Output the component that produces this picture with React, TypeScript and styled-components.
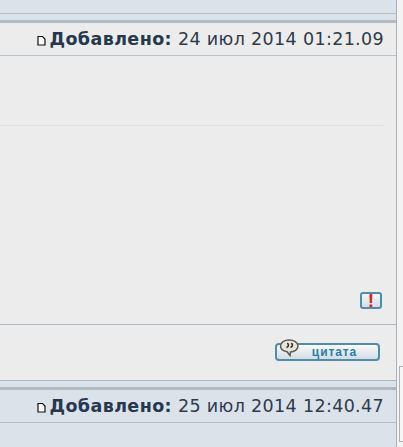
import React from "react";
import styled, { createGlobalStyle } from "styled-components";

const GlobalStyle = createGlobalStyle`
   html, body {
      margin: 0;
      padding: 0;
      background: #f3f3f3;
      overflow: hidden;
   }
`;

const Page = styled.div`
   position: relative;
   width: 403px;
   height: 447px;
   overflow: hidden;
   font-family: "DejaVu Sans", Verdana, sans-serif;
`;

const Thread = styled.div`
   width: 396px;
   height: 447px;
   border-right: 1px solid #a9b2ba;
   display: flex;
   flex-direction: column;
`;

const Band = styled.div<{ $h: number; $line?: boolean }>`
   height: ${({ $h }) => $h}px;
   flex: none;
   background: #dbe2ea;
   border-bottom: ${({ $line }) => ($line ? "1px solid #b4bec6" : "none")};
   box-sizing: border-box;
`;

const Divider = styled.div`
   height: 3px;
   flex: none;
   background: #b1bbc4;
`;

const PostHead = styled.div<{ $alt?: boolean }>`
   height: 33px;
   flex: none;
   box-sizing: border-box;
   padding-right: 12px;
   display: flex;
   align-items: center;
   justify-content: flex-end;
   background: ${({ $alt }) => ($alt ? "#dbe2ea" : "#ececec")};
   border-bottom: 1px solid ${({ $alt }) => ($alt ? "#b4bec6" : "#b7c5d0")};
   color: #2f3b4a;
   font-size: 17.5px;
   letter-spacing: 0.35px;
   white-space: nowrap;
`;

const PageIcon = styled.svg`
   width: 9px;
   height: 11px;
   margin: 2px 3px 0 0;
`;

const Label = styled.b`
   color: #26384f;
   letter-spacing: 0.4px;
   margin-right: 6px;
`;

const PostBody = styled.div`
   height: 269px;
   flex: none;
   box-sizing: border-box;
   padding-right: 13px;
   background: #ececec;
   display: flex;
   flex-direction: column;
   border-bottom: 1px solid #a8bac8;
`;

const Text = styled.div`
   height: 69px;
   flex: none;
   border-bottom: 1px solid #e0e1e2;
`;

const Report = styled.div`
   margin: auto 1px 15px auto;
`;

const IconBtn = styled.div`
   width: 22px;
   height: 17px;
   box-sizing: border-box;
   border: 2px solid #4f8dab;
   border-radius: 3px;
   background: linear-gradient(#f4f6f7, #d5dde4);
   color: #d2232a;
   font: bold 19px/14px "Liberation Sans", sans-serif;
   text-align: center;
`;

const PostFoot = styled.div`
   height: 56px;
   flex: none;
   box-sizing: border-box;
   padding: 18px 16px 0 0;
   background: #ececec;
   border-bottom: 1px solid #aeb6bd;
   display: flex;
   justify-content: flex-end;
`;

const QuoteBtn = styled.div`
   position: relative;
   width: 105px;
   height: 18px;
   box-sizing: border-box;
   border: 2px solid #4f8dab;
   border-radius: 4px;
   background: linear-gradient(#f8f9fa, #d3dce4);
   color: #2b7cab;
   font: bold 12px/14px "Liberation Sans", sans-serif;
   letter-spacing: 0.9px;
   text-align: center;
   padding-left: 14px;
`;

const Bubble = styled.svg`
   position: absolute;
   left: 2px;
   top: -6px;
   width: 21px;
   height: 18px;
`;

const SideBox = styled.div`
   position: absolute;
   left: 399px;
   top: 366px;
   width: 10px;
   height: 74px;
   border: 1px solid #a9b2ba;
   background: #f6f6f6;
`;

function Head({ stamp, alt }: { stamp: string; alt?: boolean }) {
   return (
      <PostHead $alt={alt}>
         <PageIcon viewBox="0 0 9 11">
            <path d="M1 1.500h4.500l2.500 2.500v6H1z" fill="#fff" stroke="#111" strokeWidth="1.200" />
         </PageIcon>
         <Label>Добавлено:</Label>
         {stamp}
      </PostHead>
   );
}

export default function App() {
   return (
      <Page>
         <GlobalStyle />
         <Thread>
            <Band $h={14} $line />
            <Band $h={6} />
            <Divider />
            <Head stamp="24 июл 2014 01:21.09" />
            <PostBody>
               <Text />
               <Report>
                  <IconBtn>!</IconBtn>
               </Report>
            </PostBody>
            <PostFoot>
               <QuoteBtn>
                  <Bubble viewBox="0 0 21 18">
                     <path
                        d="M10 1c5 0 9 2.300 9 6s-4 6-7.500 6L11 16.500 8 12.700C4 12 1.500 10 1.500 7c0-3.700 4-6 8.500-6z"
                        fill="#e8e5d8"
                        stroke="#5a5a55"
                        strokeWidth="1.500"
                     />
                     <path d="M8 4.500c1 0 1.500.6 1.500 1.500S8.800 8 7.500 8.500M12 4.500c1 0 1.500.6 1.500 1.500S12.800 8 11.500 8.500" fill="none" stroke="#2f2f2f" strokeWidth="1.500" />
                  </Bubble>
                  цитата
               </QuoteBtn>
            </PostFoot>
            <Band $h={6} />
            <Divider />
            <Head alt stamp="25 июл 2014 12:40.47" />
            <Band $h={25} />
         </Thread>
         <SideBox />
      </Page>
   );
}
